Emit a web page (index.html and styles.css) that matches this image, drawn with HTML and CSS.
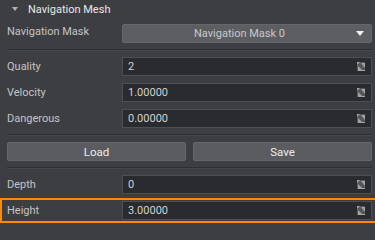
FILE: index.html
```html
<!doctype html>
<html lang="en">
  <head>
    <meta charset="UTF-8" />
    <title>Navigation Mesh</title>
    <link rel="stylesheet" href="styles.css">
  </head>
  <body>
    <div class="panel">
      <div class="section-head">
        <span class="caret"></span>
        <span class="section-title">Navigation Mesh</span>
      </div>

      <div class="row">
        <span class="label">Navigation Mask</span>
        <div class="combo">
          <span class="combo-text">Navigation Mask 0</span>
          <span class="combo-arrow"></span>
        </div>
      </div>

      <div class="sep"></div>

      <div class="group">
        <div class="row">
          <span class="label">Quality</span>
          <div class="field"><span class="value">2</span><svg class="drag" viewBox="0 0 8 9" width="8" height="9"><rect width="8" height="9" fill="#56575b"/><polygon points="0,0 3,0 0,3" fill="#a3a3a3"/><polygon points="1,4 5,8 8,8 8,9 1,9" fill="#a3a3a3"/><polygon points="4,1 8,1 8,6" fill="#a3a3a3"/></svg></div>
        </div>
        <div class="row">
          <span class="label">Velocity</span>
          <div class="field"><span class="value">1.00000</span><svg class="drag" viewBox="0 0 8 9" width="8" height="9"><rect width="8" height="9" fill="#56575b"/><polygon points="0,0 3,0 0,3" fill="#a3a3a3"/><polygon points="1,4 5,8 8,8 8,9 1,9" fill="#a3a3a3"/><polygon points="4,1 8,1 8,6" fill="#a3a3a3"/></svg></div>
        </div>
        <div class="row">
          <span class="label">Dangerous</span>
          <div class="field"><span class="value">0.00000</span><svg class="drag" viewBox="0 0 8 9" width="8" height="9"><rect width="8" height="9" fill="#56575b"/><polygon points="0,0 3,0 0,3" fill="#a3a3a3"/><polygon points="1,4 5,8 8,8 8,9 1,9" fill="#a3a3a3"/><polygon points="4,1 8,1 8,6" fill="#a3a3a3"/></svg></div>
        </div>
      </div>

      <div class="sep"></div>

      <div class="buttons">
        <button class="btn">Load</button>
        <button class="btn">Save</button>
      </div>

      <div class="sep"></div>

      <div class="group">
        <div class="row">
          <span class="label">Depth</span>
          <div class="field"><span class="value">0</span><svg class="drag" viewBox="0 0 8 9" width="8" height="9"><rect width="8" height="9" fill="#56575b"/><polygon points="0,0 3,0 0,3" fill="#a3a3a3"/><polygon points="1,4 5,8 8,8 8,9 1,9" fill="#a3a3a3"/><polygon points="4,1 8,1 8,6" fill="#a3a3a3"/></svg></div>
        </div>
        <div class="row highlight">
          <span class="label">Height</span>
          <div class="field"><span class="value">3.00000</span><svg class="drag" viewBox="0 0 8 9" width="8" height="9"><rect width="8" height="9" fill="#56575b"/><polygon points="0,0 3,0 0,3" fill="#a3a3a3"/><polygon points="1,4 5,8 8,8 8,9 1,9" fill="#a3a3a3"/><polygon points="4,1 8,1 8,6" fill="#a3a3a3"/></svg></div>
        </div>
      </div>
    </div>
  </body>
</html>
```

FILE: styles.css
```css
* {
  margin: 0;
  padding: 0;
  box-sizing: border-box;
}

body {
  font-family: Roboto, "Liberation Sans", sans-serif;
  font-size: 11px;
  background: #3d3e42;
  color: #c4c4c4;
  width: 375px;
  height: 240px;
  overflow: hidden;
}

.panel {
  display: flex;
  flex-direction: column;
  padding: 0 3px 0 7px;
}

.section-head {
  height: 20px;
  display: flex;
  align-items: center;
  padding-left: 5px;
  margin-left: -7px;
  margin-right: -3px;
  padding-bottom: 2px;
}

.caret {
  width: 0;
  height: 0;
  border-left: 3px solid transparent;
  border-right: 3px solid transparent;
  border-top: 4px solid #b4b4b4;
  margin-left: 7px;
  margin-right: 10px;
}

.section-title {
  color: #e8e8e8;
  font-size: 11px;
}

.row {
  display: flex;
  align-items: center;
}

.label {
  width: 115px;
  flex-shrink: 0;
}

.combo {
  flex: 1;
  height: 19px;
  margin-top: 4px;
  background: #5d5e62;
  border: 1px solid #66676b;
  border-radius: 2px;
  display: flex;
  align-items: center;
  position: relative;
}

.combo-text {
  flex: 1;
  text-align: center;
  color: #c8c8c8;
}

.combo-arrow {
  width: 0;
  height: 0;
  border-left: 4px solid transparent;
  border-right: 4px solid transparent;
  border-top: 5px solid #f2f2f2;
  margin-right: 7px;
}

.sep {
  background: #2e2f32;
  border-bottom: 1px solid #46474b;
  height: 2px;
  margin: 6px 0 6px;
}

.group {
  display: flex;
  flex-direction: column;
  gap: 7px;
}

.field {
  flex: 1;
  height: 19px;
  background: #2a2b2e;
  border: 1px solid #4e4f53;
  display: flex;
  align-items: center;
  padding: 0 6px 0 5px;
}

.value {
  flex: 1;
  color: #d2d2d2;
}

.drag {
  display: block;
}

.buttons {
  display: flex;
  gap: 7px;
}

.btn {
  flex: 1;
  height: 19px;
  background: #5b5c60;
  border: 1px solid #66676b;
  border-radius: 2px;
  color: #ececec;
  font-family: inherit;
  font-size: 11.5px;
}

.highlight {
  outline: 2px solid #ff8a00;
  outline-offset: 1px;
  margin-left: -4px;
  padding-left: 4px;
  margin-right: -4px;
  padding-right: 4px;
}
```
